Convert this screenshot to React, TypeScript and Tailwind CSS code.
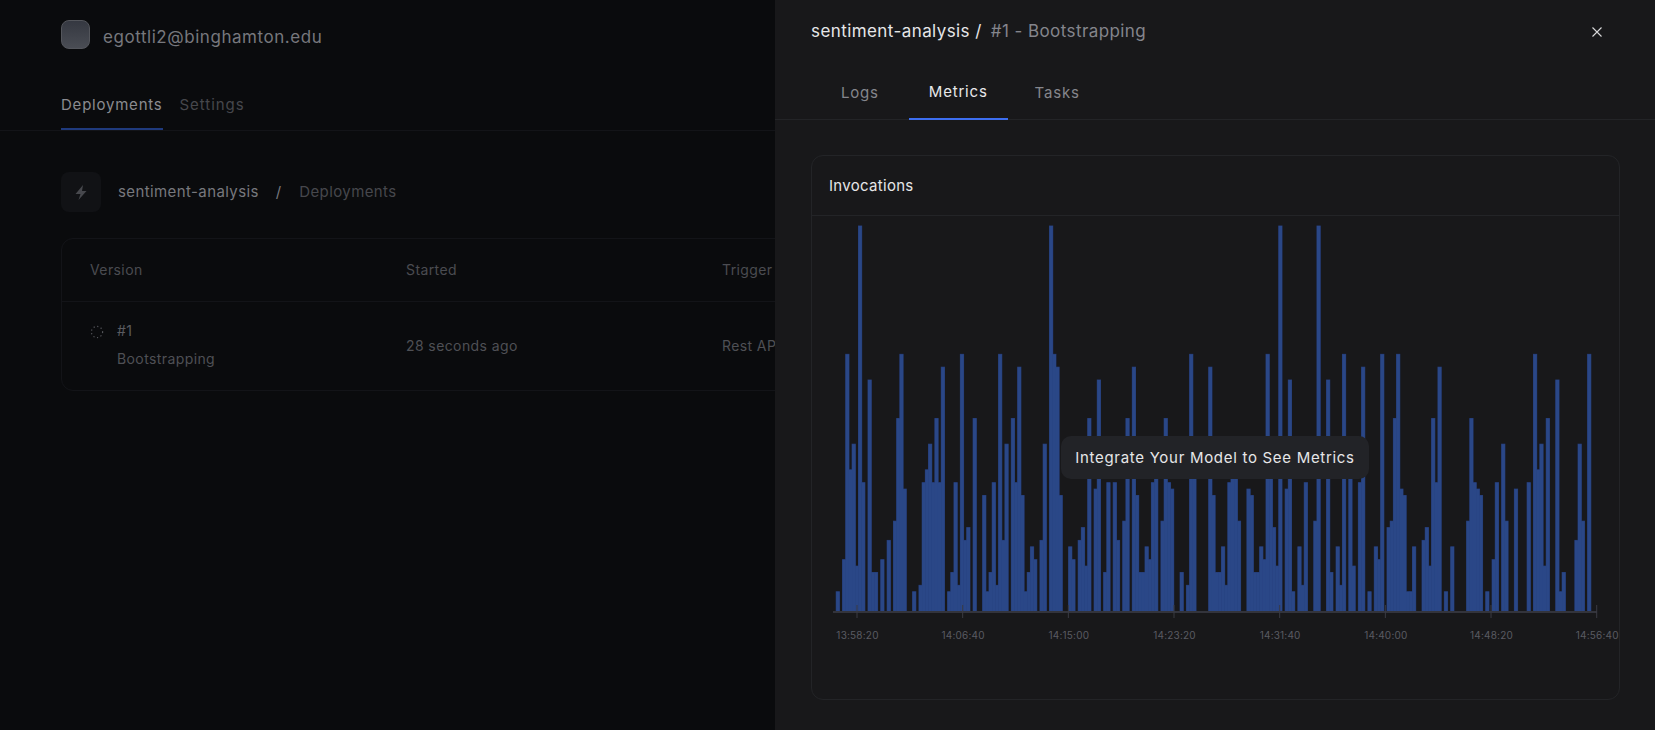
import React from "react";

const V = [3,0,8,40,22,26,7,60,20,0,36,6,6,0,8,0,11,0,14,30,40,19,0,0,3,0,4,20,22,26,20,30,20,38,0,3,6,20,4,40,11,13,0,30,0,0,18,3,6,20,4,40,11,26,0,30,20,38,18,3,6,10,8,0,11,26,0,60,40,38,18,0,0,10,8,0,11,13,7,30,0,19,36,0,6,20,0,20,11,0,14,30,0,38,18,6,6,10,8,20,21,0,14,30,20,19,0,0,6,0,4,40,21,0,0,0,0,38,18,6,6,10,4,20,21,21,14,0,0,19,18,6,6,10,8,40,21,13,7,60,0,19,36,3,0,10,4,20,0,0,14,60,0,0,36,6,0,10,4,40,0,21,7,0,20,38,0,3,0,10,8,40,0,13,14,30,40,19,18,3,3,10,0,0,11,13,7,30,20,38,0,3,0,10,0,0,0,0,14,30,20,19,18,0,3,0,8,20,0,26,14,0,0,19,0,0,0,20,0,40,22,26,7,30,0,0,36,3,6,0,0,0,11,26,14,0,40];

const TICKS = ["13:58:20","14:06:40","14:15:00","14:23:20","14:31:40","14:40:00","14:48:20","14:56:40"];

function Chart() {
  const ox = 812, oy = 216, base = 611 - oy, unit = 385 / 60, pitch = 3.184, x0 = 837.8 - ox;
  return (
    <svg width="807" height="483" className="block">
      {V.map((v, i) => v > 0 && (
        <rect key={"s" + i} x={x0 + pitch * i - pitch / 2} y={base - v * unit} width={pitch} height={v * unit} fill="#243a72" stroke="#243a72" strokeWidth="1" />
      ))}
      {V.map((v, i) => v > 0 && (
        <rect key={"f" + i} x={x0 + pitch * i - pitch / 2 - 0.1} y={base - v * unit} width={pitch + 0.2} height={v * unit} fill="#2a4787" />
      ))}
      <rect x={833 - ox} y={base} width={764} height="2" fill="#33343c" />
      {TICKS.map((t, i) => {
        const x = 857 + 105.67 * i - ox;
        return (
          <g key={t}>
            <rect x={x - 0.5} y={base - 6} width="1" height="13" fill="#3a3b43" />
            <text x={x + 0.5} y={base + 28} textAnchor="middle" fontSize="10" letterSpacing="0.2" fill="#5a5b62" fontFamily="Inter">{t}</text>
          </g>
        );
      })}
    </svg>
  );
}

export default function App() {
  return (
    <div className="relative h-[730px] w-[1655px] overflow-hidden bg-[#0a0b0d] font-['Inter',sans-serif]">
      <div className="flex h-[68px] items-center gap-[13px] pl-[61px] pt-[7px]">
        <div className="-mt-[7px] h-[29px] w-[29px] rounded-[8px] border border-[#54565c] bg-gradient-to-b from-[#353841] to-[#4a4d54]" />
        <span className="text-[17px] tracking-[0.55px] text-[#77787d]">egottli2@binghamton.edu</span>
      </div>
      <div className="flex h-[63px] items-start gap-[17px] border-b border-[#131418] pl-[61px]">
        <div className="flex h-[62px] items-center border-b-2 border-[#1f3a7d] pt-[14px] text-[15px] tracking-[0.78px] text-[#8a8b90]">Deployments</div>
        <div className="flex h-[60px] items-center pt-[14px] text-[15px] tracking-[0.95px] text-[#46474c]">Settings</div>
      </div>
      <div className="flex items-center pl-[61px] pt-[41px]">
        <div className="flex h-[40px] w-[40px] items-center justify-center rounded-[8px] bg-[#111215]">
          <svg width="12" height="15" viewBox="0 0 12 15"><path d="M8 0 .5 9h5l-2 6 8-9H7z" fill="#47484d" /></svg>
        </div>
        <span className="ml-[17px] text-[15px] tracking-[0.4px] text-[#77787d]">sentiment-analysis</span>
        <span className="ml-[17px] text-[15px] text-[#77787d]">/</span>
        <span className="ml-[18px] text-[15px] tracking-[0.4px] text-[#46474c]">Deployments</span>
      </div>
      <div className="mx-[61px] mt-[26px] rounded-[12px] border border-[#131418]">
        <div className="grid h-[63px] grid-cols-[316px_316px_316px_1fr] items-center border-b border-[#131418] pb-[2px] pl-[28px] text-[14px] tracking-[0.4px] text-[#4b4c51]">
          <span>Version</span>
          <span>Started</span>
          <span>Trigger</span>
          <span />
        </div>
        <div className="grid h-[88px] grid-cols-[316px_316px_316px_1fr] items-center pl-[28px] text-[14px] tracking-[0.4px] text-[#4f5055]">
          <div className="-mt-[2px] flex gap-[13px]">
            <svg width="14" height="14" viewBox="0 0 14 14" className="mt-[4px]"><circle cx="7" cy="7" r="5.6" fill="none" stroke="#55565b" strokeWidth="1.2" strokeDasharray="1.2 2.5" /></svg>
            <div className="flex flex-col gap-[8px]">
              <span className="leading-[20px] text-[#5a5b60]">#1</span>
              <span className="leading-[20px]">Bootstrapping</span>
            </div>
          </div>
          <span className="-mt-[1px]">28 seconds ago</span>
          <span className="-mt-[1px]">Rest API</span>
          <span />
        </div>
      </div>

      <div className="absolute bottom-0 left-[775px] right-0 top-0 flex flex-col bg-[#18181a]">
        <div className="flex h-[63px] items-center justify-between pl-[36px] pr-[52px]">
          <div className="flex items-center gap-[9px] text-[17px] tracking-[0.42px]">
            <span className="text-[#e6e6e8]">sentiment-analysis /</span>
            <span className="text-[#84858c]">#1 - Bootstrapping</span>
          </div>
          <svg width="12" height="12" viewBox="0 0 12 12"><path d="M1.5 1.5l9 9M10.5 1.5l-9 9" stroke="#d8d8da" strokeWidth="1.1" fill="none" /></svg>
        </div>
        <div className="flex h-[57px] border-b border-[#232427] pl-[46px] text-[15px] tracking-[0.8px]">
          <div className="flex h-[56px] items-center px-[20px] pt-[5px] text-[#85868c]">Logs</div>
          <div className="ml-[10px] flex h-[57px] items-center border-b-2 border-[#3d6ef0] px-[20px] pt-[4px] text-[#e8e8ea]">Metrics</div>
          <div className="ml-[7px] flex h-[56px] items-center px-[20px] pt-[5px] text-[#85868c]">Tasks</div>
        </div>
        <div className="ml-[36px] mr-[35px] mt-[35px] h-[545px] rounded-[12px] border border-[#232427]">
          <div className="flex h-[60px] items-center border-b border-[#232427] pl-[17px] pt-[2px] text-[15px] tracking-[0.3px] text-[#e6e6e8]">Invocations</div>
          <div className="relative">
            <Chart />
            <div className="absolute left-[249px] top-[220px] flex h-[43px] w-[308px] items-center justify-center rounded-[10px] bg-[#222327] pt-[1px] text-[15px] tracking-[0.7px] text-[#e6e6e8]">Integrate Your Model to See Metrics</div>
          </div>
        </div>
      </div>
    </div>
  );
}
